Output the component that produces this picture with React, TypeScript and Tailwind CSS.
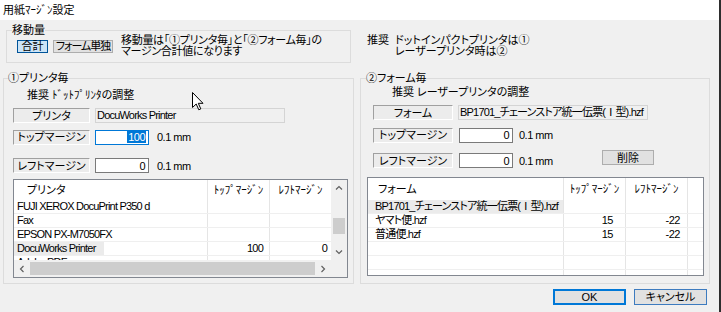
import React from "react";

type Dir = "up" | "down" | "left" | "right";

function Chevron({ dir }: { dir: Dir }) {
  const d = {
    up: "M1 5.5 L4 2.5 L7 5.5",
    down: "M1 2.5 L4 5.5 L7 2.5",
    left: "M5.5 1 L2.5 4 L5.5 7",
    right: "M2.5 1 L5.5 4 L2.5 7",
  }[dir];
  return (
    <svg width="8" height="8" viewBox="0 0 8 8">
      <path d={d} fill="none" stroke="#606060" strokeWidth="1.2" />
    </svg>
  );
}

// sunken static label ("プリンタ", "トップマージン" ...)
function Caption({ children, w }: { children: React.ReactNode; w: string }) {
  return (
    <div
      className={`${w} h-[15px] shrink-0 flex items-center justify-center bg-[#ececec] border border-t-[#a0a0a0] border-l-[#a0a0a0] border-r-white border-b-white leading-[12px]`}
    >
      {children}
    </div>
  );
}

function NumBox({ value, focused }: { value: string; focused?: boolean }) {
  return (
    <div
      className={
        focused
          ? "w-[54px] h-[15px] shrink-0 bg-white border border-[#0078d7] flex items-center justify-end pr-[2px]"
          : "w-[54px] h-[15px] shrink-0 bg-white border border-[#7a7a7a] flex items-center justify-end pr-[3px]"
      }
    >
      {focused ? (
        <span className="bg-[#0078d7] text-white leading-[12px] px-[1px] tracking-[-0.5px]">{value}</span>
      ) : (
        <span className="leading-[12px] tracking-[-0.5px]">{value}</span>
      )}
    </div>
  );
}

const printers = [
  { name: "FUJI XEROX DocuPrint P350 d", top: "", left: "" },
  { name: "Fax", top: "", left: "" },
  { name: "EPSON PX-M7050FX", top: "", left: "" },
  { name: "DocuWorks Printer", top: "100", left: "0", sel: true },
  { name: "Adobe PDF", top: "", left: "" },
];

const forms = [
  { name: "BP1701_チェーンストア統一伝票(Ⅰ型).hzf", top: "", left: "", sel: true },
  { name: "ヤマト便.hzf", top: "15", left: "-22" },
  { name: "普通便.hzf", top: "15", left: "-22" },
  { name: "", top: "", left: "" },
  { name: "", top: "", left: "" },
  { name: "", top: "", left: "" },
];

function PrinterList() {
  return (
    <div className="mt-[5px] w-[335px] h-[99px] border border-[#828790] bg-white flex flex-col">
      <div className="flex h-[80px]">
        <div className="w-[317px] overflow-hidden">
          <div className="flex h-[20px]">
            <div className="w-[194px] flex items-center pl-[13px] border-r border-[#e5e5e5]">プリンタ</div>
            <div className="w-[62px] flex items-center justify-center border-r border-[#e5e5e5]">ﾄｯﾌﾟﾏｰｼﾞﾝ</div>
            <div className="w-[61px] flex items-center justify-center">ﾚﾌﾄﾏｰｼﾞﾝ</div>
          </div>
          {printers.map((p) => (
            <div key={p.name} className="flex h-[14px] border-b border-[#efefef] tracking-[-0.8px] leading-[13px]">
              <div className="w-[194px] border-r border-[#e5e5e5]">
                {p.sel ? (
                  <span className="inline-block h-[13px] bg-[#ebebeb] pl-[3px] pr-[8px]">{p.name}</span>
                ) : (
                  <span className="pl-[3px]">{p.name}</span>
                )}
              </div>
              <div className="w-[62px] text-right pr-[6px] border-r border-[#e5e5e5]">{p.top}</div>
              <div className="w-[61px] text-right pr-[4px]">{p.left}</div>
            </div>
          ))}
        </div>
        <div className="w-[16px] bg-[#f0f0f0] flex flex-col items-center">
          <div className="h-[16px] flex items-center">
            <Chevron dir="up" />
          </div>
          <div className="mt-[22px] w-[12px] h-[16px] bg-[#cdcdcd]" />
          <div className="mt-auto h-[16px] flex items-center">
            <Chevron dir="down" />
          </div>
        </div>
      </div>
      <div className="flex h-[17px] bg-[#f0f0f0]">
        <div className="w-[16px] flex items-center justify-center">
          <Chevron dir="left" />
        </div>
        <div className="w-[285px] my-[2px] bg-[#cdcdcd]" />
        <div className="w-[16px] flex items-center justify-center">
          <Chevron dir="right" />
        </div>
        <div className="w-[16px]" />
      </div>
    </div>
  );
}

function FormList() {
  return (
    <div className="mt-[8px] w-[337px] h-[99px] border border-[#828790] bg-white overflow-hidden">
      <div className="flex h-[22px]">
        <div className="w-[196px] flex items-center pl-[10px] border-r border-[#e5e5e5]">フォーム</div>
        <div className="w-[62px] flex items-center justify-center border-r border-[#e5e5e5]">ﾄｯﾌﾟﾏｰｼﾞﾝ</div>
        <div className="w-[62px] flex items-center justify-center border-r border-[#e5e5e5]">ﾚﾌﾄﾏｰｼﾞﾝ</div>
        <div className="w-[15px]" />
      </div>
      {forms.map((f, i) => (
        <div key={i} className="flex h-[14px] border-b border-[#efefef] leading-[13px]">
          <div
            className={
              f.sel
                ? "w-[196px] pl-[7px] bg-[#ebebeb] border-r border-[#e5e5e5] whitespace-nowrap overflow-hidden tracking-[-0.8px]"
                : "w-[196px] pl-[7px] border-r border-[#e5e5e5] whitespace-nowrap overflow-hidden tracking-[-0.8px]"
            }
          >
            {f.name}
          </div>
          <div className="w-[62px] text-right pr-[12px] border-r border-[#e5e5e5] tracking-[-0.5px]">{f.top}</div>
          <div className="w-[62px] text-right pr-[7px] border-r border-[#e5e5e5] tracking-[-0.5px]">{f.left}</div>
          <div className="w-[15px]" />
        </div>
      ))}
    </div>
  );
}

function Cursor() {
  return (
    <svg className="absolute left-[192px] top-[92px]" width="12" height="19" viewBox="0 0 12 19">
      <path
        d="M0.5 0.5 V15.5 L4.2 12 L6.8 17.8 L8.8 16.9 L6.3 11.3 H11 Z"
        fill="white"
        stroke="black"
        strokeWidth="1"
        strokeLinejoin="round"
      />
    </svg>
  );
}

export default function App() {
  return (
    <div className="relative w-[721px] h-[312px] flex flex-col overflow-hidden bg-[#f0f0f0] border-r-2 border-[#2d2d2d] text-black text-[11px] [font-feature-settings:'palt'] font-['Liberation_Sans','Noto_Sans_CJK_JP',sans-serif]">
      {/* Title */}
      <div className="h-[20px] shrink-0 bg-white pl-[3px] leading-[20px]">用紙ﾏｰｼﾞﾝ設定</div>

      {/* 移動量 */}
      <div className="flex h-[52px] shrink-0">
        <fieldset className="ml-[6px] mt-[4px] w-[345px] h-[39px] border border-[#dcdcdc]">
          <legend className="ml-[5px] leading-[12px]">移動量</legend>
          <div className="flex -mt-[1px] pl-[10px]">
            <div className="flex gap-[5px] mt-[5px]">
              <button className="w-[31px] h-[13px] bg-[#cce4f7] border border-[#005499] leading-[11px]">合計</button>
              <button className="w-[60px] h-[13px] bg-[#e1e1e1] border border-[#adadad] leading-[11px] whitespace-nowrap tracking-[-1px]">
                フォーム単独
              </button>
            </div>
            <div className="ml-[8px] leading-[11px] tracking-[-0.3px]">
              <div>移動量は「①プリンタ毎」と「②フォーム毎」の</div>
              <div>マージン合計値になります</div>
            </div>
          </div>
        </fieldset>
        <div className="ml-[16px] mt-[15px] flex leading-[11px]">
          <div className="w-[28px]">推奨</div>
          <div>
            <div>ドットインパクトプリンタは①</div>
            <div>レーザープリンタ時は②</div>
          </div>
        </div>
      </div>

      {/* Groups */}
      <div className="flex h-[212px] shrink-0">
        <fieldset className="ml-[3px] w-[351px] h-[212px] border border-[#dcdcdc]">
          <legend className="ml-[4px] leading-[12px]">①プリンタ毎</legend>
          <div className="flex flex-col pl-[9px]">
            <div className="mt-[6px] ml-[14px] leading-[11px]">推奨 ﾄﾞｯﾄﾌﾟﾘﾝﾀの調整</div>
            <div className="mt-[7px] flex">
              <Caption w="w-[77px]">プリンタ</Caption>
              <div className="ml-[5px] w-[190px] h-[15px] bg-[#f0f0f0] border border-[#d4d4d4] pl-[1px] leading-[13px] tracking-[-0.8px]">
                DocuWorks Printer
              </div>
            </div>
            <div className="mt-[6px] flex items-center">
              <Caption w="w-[77px]">トップマージン</Caption>
              <div className="ml-[5px]">
                <NumBox value="100" focused />
              </div>
              <span className="ml-[8px] tracking-[-0.5px]">0.1 mm</span>
            </div>
            <div className="mt-[12px] flex items-center">
              <Caption w="w-[77px]">レフトマージン</Caption>
              <div className="ml-[5px]">
                <NumBox value="0" />
              </div>
              <span className="ml-[8px] tracking-[-0.5px]">0.1 mm</span>
            </div>
            <PrinterList />
          </div>
        </fieldset>

        <fieldset className="ml-[6px] w-[350px] h-[212px] border border-[#dcdcdc]">
          <legend className="ml-[5px] leading-[12px]">②フォーム毎</legend>
          <div className="flex flex-col pl-[6px]">
            <div className="mt-[3px] ml-[25px] leading-[11px]">推奨 レーザープリンタの調整</div>
            <div className="mt-[7px] ml-[6px] flex">
              <Caption w="w-[80px]">フォーム</Caption>
              <div className="ml-[5px] w-[190px] h-[15px] bg-[#f0f0f0] border border-[#d4d4d4] pl-[1px] leading-[13px] tracking-[-0.8px] whitespace-nowrap overflow-hidden">
                BP1701_チェーンストア統一伝票(Ⅰ型).hzf
              </div>
            </div>
            <div className="mt-[7px] ml-[6px] flex items-center">
              <Caption w="w-[80px]">トップマージン</Caption>
              <div className="ml-[6px]">
                <NumBox value="0" />
              </div>
              <span className="ml-[6px] tracking-[-0.5px]">0.1 mm</span>
            </div>
            <div className="mt-[9px] ml-[6px] flex items-center">
              <Caption w="w-[80px]">レフトマージン</Caption>
              <div className="ml-[6px]">
                <NumBox value="0" />
              </div>
              <span className="ml-[6px] w-[83px] tracking-[-0.5px]">0.1 mm</span>
              <button className="-mt-[6px] w-[52px] h-[15px] bg-[#e1e1e1] border border-[#adadad] leading-[12px]">削除</button>
            </div>
            <FormList />
          </div>
        </fieldset>
      </div>

      {/* Buttons */}
      <div className="flex justify-end gap-[8px] pr-[12px] mt-[5px]">
        <button className="w-[73px] h-[16px] bg-[#e1e1e1] border-2 border-[#0078d7] leading-[12px]">OK</button>
        <button className="w-[73px] h-[16px] bg-[#e1e1e1] border border-[#3d7bbf] leading-[14px]">キャンセル</button>
      </div>

      <Cursor />
    </div>
  );
}
